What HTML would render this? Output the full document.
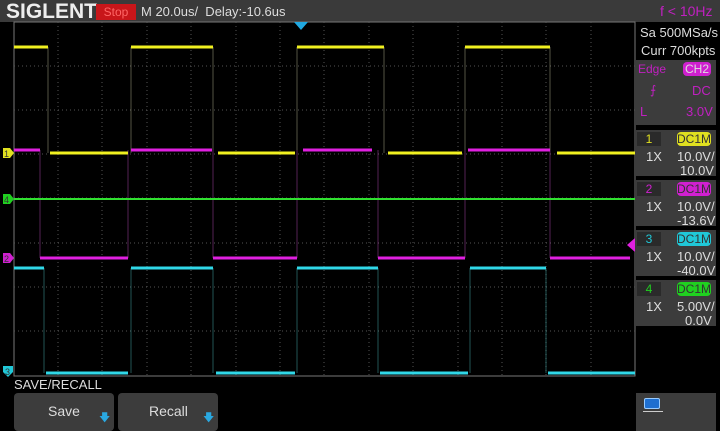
<!DOCTYPE html>
<html><head><style>
body{margin:0;width:720px;height:431px;background:#000;overflow:hidden;font-family:"Liberation Sans",sans-serif;position:relative}
.a{position:absolute}
.hdr{left:0;top:0;width:720px;height:22px;background:#3a3a3a}
.panel{left:636px;background:#3c3c3c;width:80px}
.t{color:#ddd;font-size:13px}
.btn{background:#3c3c3c;border-radius:4px;color:#ddd;font-size:14px}
</style></head><body>
<div class="a hdr"></div>
<div class="a" style="left:6px;top:1px;font-weight:bold;font-size:21px;color:#eee;letter-spacing:0px;line-height:22px">SIGLENT</div>
<div class="a" style="left:96px;top:4px;width:40px;height:16px;background:#c8161a;color:#f66;font-size:12px;text-align:center;line-height:16px">Stop</div>
<div class="a t" style="left:141px;top:4px">M 20.0us/&nbsp; Delay:-10.6us</div>
<div class="a" style="left:660px;top:3px;color:#c020c0;font-size:14px">f &lt; 10Hz</div>
<div class="a" style="left:636px;top:22px;width:80px;height:40px;background:#000"></div>
<div class="a t" style="left:640px;top:25px">Sa 500MSa/s</div>
<div class="a t" style="left:641px;top:43px">Curr 700kpts</div>
<div class="a panel" style="top:60px;height:65px"></div>
<div class="a" style="left:638px;top:62px;color:#c020c0;font-size:12px">Edge</div>
<div class="a" style="left:683px;top:62px;width:28px;height:14px;background:#d020d0;border-radius:4px;color:#ddd;font-size:12px;text-align:center;line-height:14px">CH2</div>
<div class="a" style="left:650px;top:83px;color:#c020c0;font-size:12px">⨍</div>
<div class="a" style="left:692px;top:83px;color:#c020c0;font-size:13px">DC</div>
<div class="a" style="left:640px;top:104px;color:#c020c0;font-size:13px">L</div>
<div class="a" style="left:686px;top:104px;color:#c020c0;font-size:13px">3.0V</div>

<div class="a panel" style="top:130px;height:46px"></div>
<div class="a panel" style="top:180px;height:46px"></div>
<div class="a panel" style="top:230px;height:46px"></div>
<div class="a panel" style="top:280px;height:46px"></div>

<div class="a" style="left:637px;top:132px;width:24px;height:14px;background:#2a2a2a;color:#e0e020;font-size:12px;text-align:center">1</div>
<div class="a" style="left:677px;top:132px;width:34px;height:14px;background:#e0e020;border-radius:4px;color:#333;font-size:12px;text-align:center;line-height:14px">DC1M</div>
<div class="a t" style="left:646px;top:149px">1X</div><div class="a t" style="left:677px;top:149px">10.0V/</div><div class="a t" style="left:680px;top:163px">10.0V</div>

<div class="a" style="left:637px;top:182px;width:24px;height:14px;background:#2a2a2a;color:#d020d0;font-size:12px;text-align:center">2</div>
<div class="a" style="left:677px;top:182px;width:34px;height:14px;background:#d020d0;border-radius:4px;color:#333;font-size:12px;text-align:center;line-height:14px">DC1M</div>
<div class="a t" style="left:646px;top:199px">1X</div><div class="a t" style="left:677px;top:199px">10.0V/</div><div class="a t" style="left:677px;top:213px">-13.6V</div>

<div class="a" style="left:637px;top:232px;width:24px;height:14px;background:#2a2a2a;color:#20c8d8;font-size:12px;text-align:center">3</div>
<div class="a" style="left:677px;top:232px;width:34px;height:14px;background:#20c8d8;border-radius:4px;color:#333;font-size:12px;text-align:center;line-height:14px">DC1M</div>
<div class="a t" style="left:646px;top:249px">1X</div><div class="a t" style="left:677px;top:249px">10.0V/</div><div class="a t" style="left:677px;top:263px">-40.0V</div>

<div class="a" style="left:637px;top:282px;width:24px;height:14px;background:#2a2a2a;color:#20d020;font-size:12px;text-align:center">4</div>
<div class="a" style="left:677px;top:282px;width:34px;height:14px;background:#20d020;border-radius:4px;color:#333;font-size:12px;text-align:center;line-height:14px">DC1M</div>
<div class="a t" style="left:646px;top:299px">1X</div><div class="a t" style="left:677px;top:299px">5.00V/</div><div class="a t" style="left:685px;top:313px">0.0V</div>

<div class="a" style="left:636px;top:393px;width:80px;height:38px;background:#3c3c3c"></div>
<div class="a" style="left:644px;top:398px;width:14px;height:9px;background:#1e6fd0;border:1px solid #9cf;border-radius:2px"></div>
<div class="a" style="left:643px;top:411px;width:20px;height:16px;border-top:1px solid #ccc"></div>

<div class="a" style="left:14px;top:377px;color:#ddd;font-size:13px">SAVE/RECALL</div>
<div class="a btn" style="left:14px;top:393px;width:100px;height:38px"><span class="a" style="left:34px;top:10px">Save</span><span class="a" style="left:85px;top:16px;color:#2aa8e0;font-size:11px">🡇</span></div>
<div class="a btn" style="left:118px;top:393px;width:100px;height:38px"><span class="a" style="left:31px;top:10px">Recall</span><span class="a" style="left:85px;top:16px;color:#2aa8e0;font-size:11px">🡇</span></div>

<svg class="a" style="left:0;top:0" width="720" height="431">
<rect x="14" y="22" width="621" height="354" fill="none" stroke="#777"/>
<g stroke="#555" stroke-dasharray="1 3">
<line x1="58" y1="22" x2="58" y2="376"/><line x1="102" y1="22" x2="102" y2="376"/><line x1="147" y1="22" x2="147" y2="376"/><line x1="191" y1="22" x2="191" y2="376"/><line x1="236" y1="22" x2="236" y2="376"/><line x1="280" y1="22" x2="280" y2="376"/><line x1="324" y1="22" x2="324" y2="376"/><line x1="369" y1="22" x2="369" y2="376"/><line x1="413" y1="22" x2="413" y2="376"/><line x1="458" y1="22" x2="458" y2="376"/><line x1="502" y1="22" x2="502" y2="376"/><line x1="546" y1="22" x2="546" y2="376"/><line x1="591" y1="22" x2="591" y2="376"/>
<line x1="14" y1="66" x2="635" y2="66"/><line x1="14" y1="110" x2="635" y2="110"/><line x1="14" y1="154" x2="635" y2="154"/><line x1="14" y1="198" x2="635" y2="198"/><line x1="14" y1="243" x2="635" y2="243"/><line x1="14" y1="287" x2="635" y2="287"/><line x1="14" y1="331" x2="635" y2="331"/>
</g>
<g stroke-width="1" opacity="0.5" fill="none">
<path d="M48 47V153M131 47V153M213 47V153M297 47V153M384 47V153M465 47V153M550 47V153" stroke="#aa8"/>
<path d="M40 150V258M128 150V258M213 150V258M297 150V258M378 150V258M465 150V258M550 150V258" stroke="#a4a"/>
<path d="M44 268V373M131 268V373M213 268V373M297 268V373M378 268V373M470 268V373M546 268V373" stroke="#4aa"/>
</g>
<g stroke-width="3" fill="none">
<path d="M14 47H48M131 47H213M297 47H384M465 47H550" stroke="#f0f020"/>
<path d="M50 153H128M218 153H295M388 153H462M557 153H635" stroke="#f0f020"/>
<path d="M14 150H40M131 150H212M303 150H372M468 150H550" stroke="#e020e0"/>
<path d="M40 258H128M213 258H297M378 258H465M550 258H630" stroke="#e020e0"/>
<path d="M14 268H44M131 268H213M297 268H378M470 268H546" stroke="#30d8e8"/>
<path d="M46 373H128M216 373H295M380 373H468M548 373H635" stroke="#30d8e8"/>
</g>
<line x1="14" y1="199" x2="635" y2="199" stroke="#30e030" stroke-width="2"/>
<path d="M3 148h7l4 5l-4 5h-7z" fill="#e0e020"/><text x="4" y="157" font-size="9" fill="#333">1</text>
<path d="M3 194h7l4 5l-4 5h-7z" fill="#20d020"/><text x="4" y="203" font-size="9" fill="#333">4</text>
<path d="M3 253h7l4 5l-4 5h-7z" fill="#d020d0"/><text x="4" y="262" font-size="9" fill="#333">2</text>
<path d="M3 366h10v6l-5 5l-5-5z" fill="#20c8d8"/><text x="5" y="375" font-size="9" fill="#333">3</text>
<path d="M294 22h14l-7 8z" fill="#20a8e0"/>
<path d="M627 245l8-7v14z" fill="#e020e0"/>
</svg>
</body></html>
